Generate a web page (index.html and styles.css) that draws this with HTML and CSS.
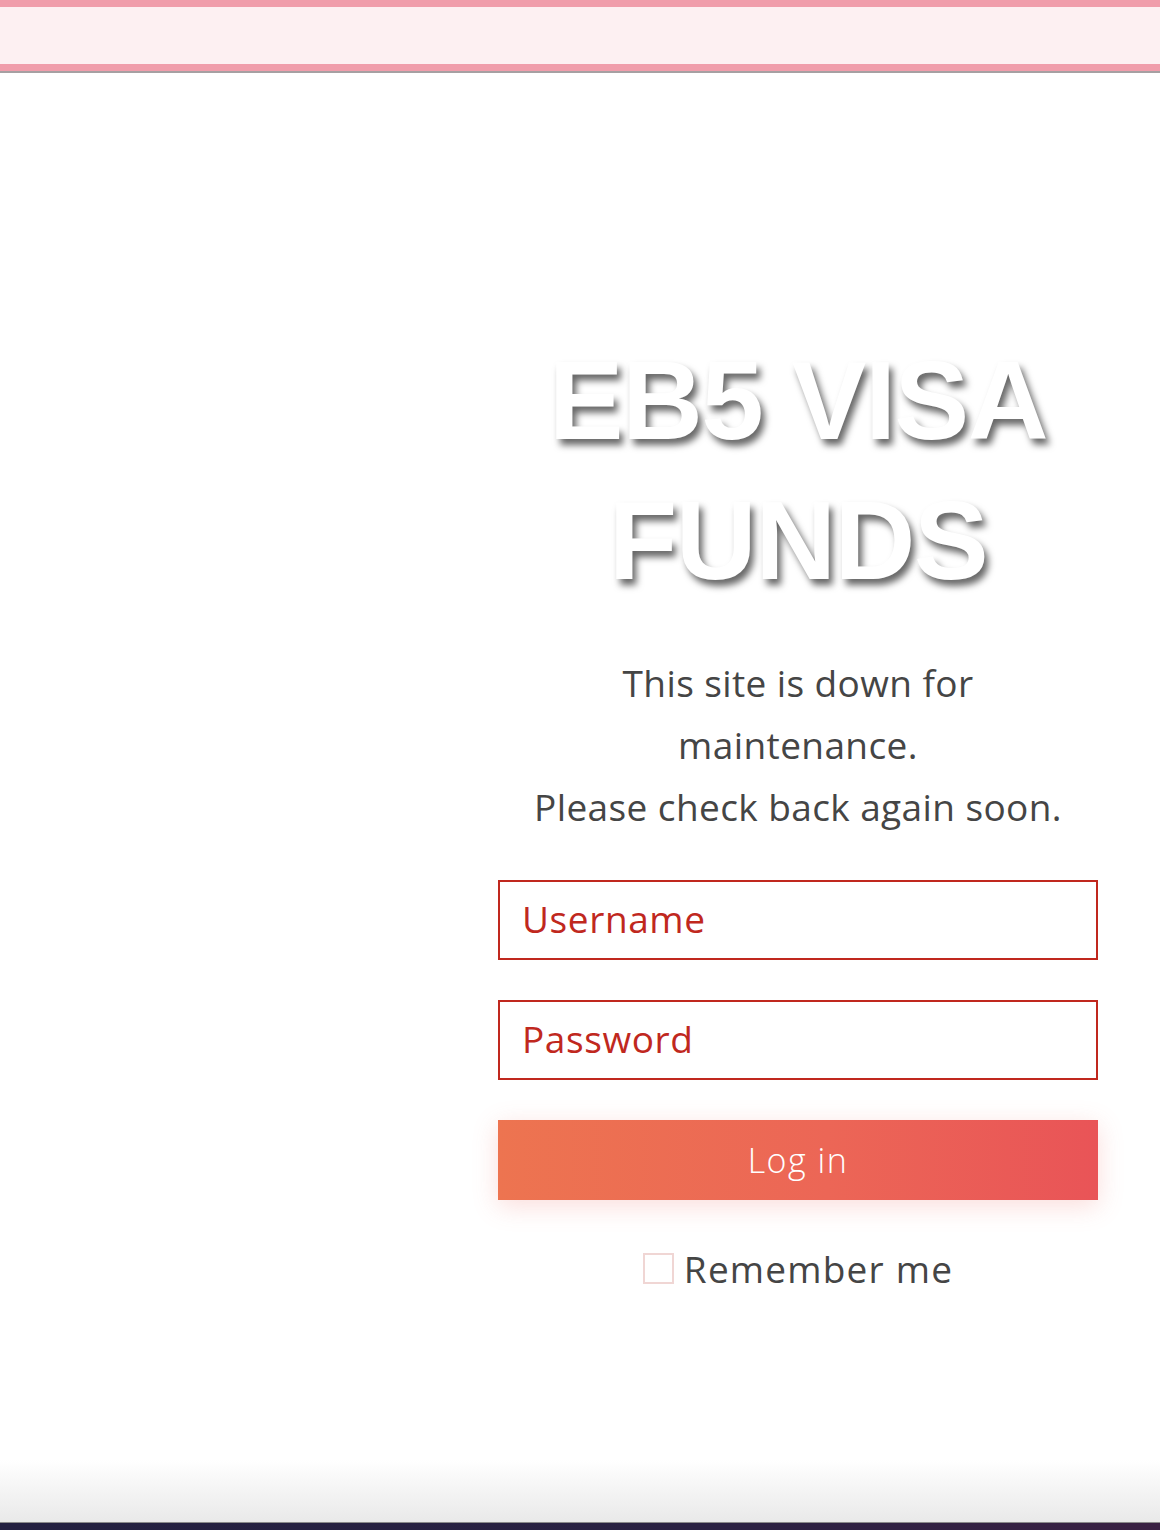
FILE: index.html
```html
<!DOCTYPE html>
<html>
<head>
<meta charset="utf-8">
<link rel="stylesheet" href="styles.css">
</head>
<body>
<header class="topbar"></header>
<main class="page">
  <div class="spacer"></div>
  <section class="panel">
    <h1 class="title">EB5 VISA<br>FUNDS</h1>
    <p class="message">This site is down for<br>maintenance.<br>Please check back again soon.</p>
    <form class="login">
      <input class="field" type="text" placeholder="Username">
      <input class="field" type="password" placeholder="Password">
      <button class="btn" type="button">Log in</button>
      <label class="remember"><span class="box"></span>Remember me</label>
    </form>
  </section>
</main>
<footer class="bottom"></footer>
<div class="dock"></div>
</body>
</html>
```
FILE: styles.css
```css
html, body {
  margin: 0;
  padding: 0;
  background: #fff;
}
body {
  width: 1160px;
  height: 1530px;
  overflow: hidden;
  display: flex;
  flex-direction: column;
  font-family: "Open Sans", "Noto Sans", sans-serif;
}
.topbar {
  height: 57px;
  background: #fdf0f2;
  border-top: 7px solid #f09dab;
  border-bottom: 7px solid #f09dab;
  box-shadow: 0 2px 0 #a6a0a2;
  flex: none;
}
.page {
  flex: 1;
  display: flex;
}
.spacer {
  width: 498px;
  flex: none;
}
.panel {
  width: 600px;
  flex: none;
  display: flex;
  flex-direction: column;
  align-items: center;
  padding-top: 260px;
}
.title {
  margin: 0;
  font-family: "Liberation Sans", Arial, sans-serif;
  font-weight: 700;
  font-size: 112px;
  line-height: 140px;
  color: #fff;
  text-align: center;
  text-shadow: 4px 6px 7px rgba(0,0,0,0.6);
  letter-spacing: -1.5px;
}
.message {
  margin: 41px 0 0;
  font-size: 37px;
  line-height: 62px;
  color: #454545;
  text-align: center;
  letter-spacing: 0.4px;
}
.login {
  margin-top: 42px;
  width: 600px;
  display: flex;
  flex-direction: column;
  gap: 40px;
}
.field {
  box-sizing: border-box;
  width: 600px;
  height: 80px;
  border: 2px solid #c0281e;
  border-radius: 0;
  padding: 0 22px 3px;
  font-family: inherit;
  font-size: 37px;
  color: #c0281e;
  background: #fff;
  outline: none;
  margin: 0;
}
.field::placeholder {
  color: #c0281e;
  opacity: 1;
  letter-spacing: 0.6px;
}
.btn {
  height: 80px;
  border: 0;
  margin: 0;
  background: linear-gradient(90deg, #ed7450 0%, #ec6656 55%, #e95457 100%);
  color: #fff;
  font-family: inherit;
  font-size: 34px;
  font-weight: 300;
  letter-spacing: 1.5px;
  box-shadow: 0 6px 24px rgba(236,100,90,0.22);
}
.remember {
  margin-top: 3px;
  align-self: center;
  display: flex;
  align-items: center;
  gap: 10px;
  font-size: 37px;
  color: #454545;
  letter-spacing: 1.2px;
}
.box {
  width: 27px;
  height: 27px;
  border: 2px solid #f0d6d4;
  display: inline-block;
}
.bottom {
  height: 62px;
  flex: none;
  background: linear-gradient(#fff, #e9e9e9);
  border-bottom: 1px solid #8a8a8a;
}
.dock {
  height: 7px;
  flex: none;
  background: linear-gradient(90deg, #232040, #2a2142 60%, #3a2143);
}
```
